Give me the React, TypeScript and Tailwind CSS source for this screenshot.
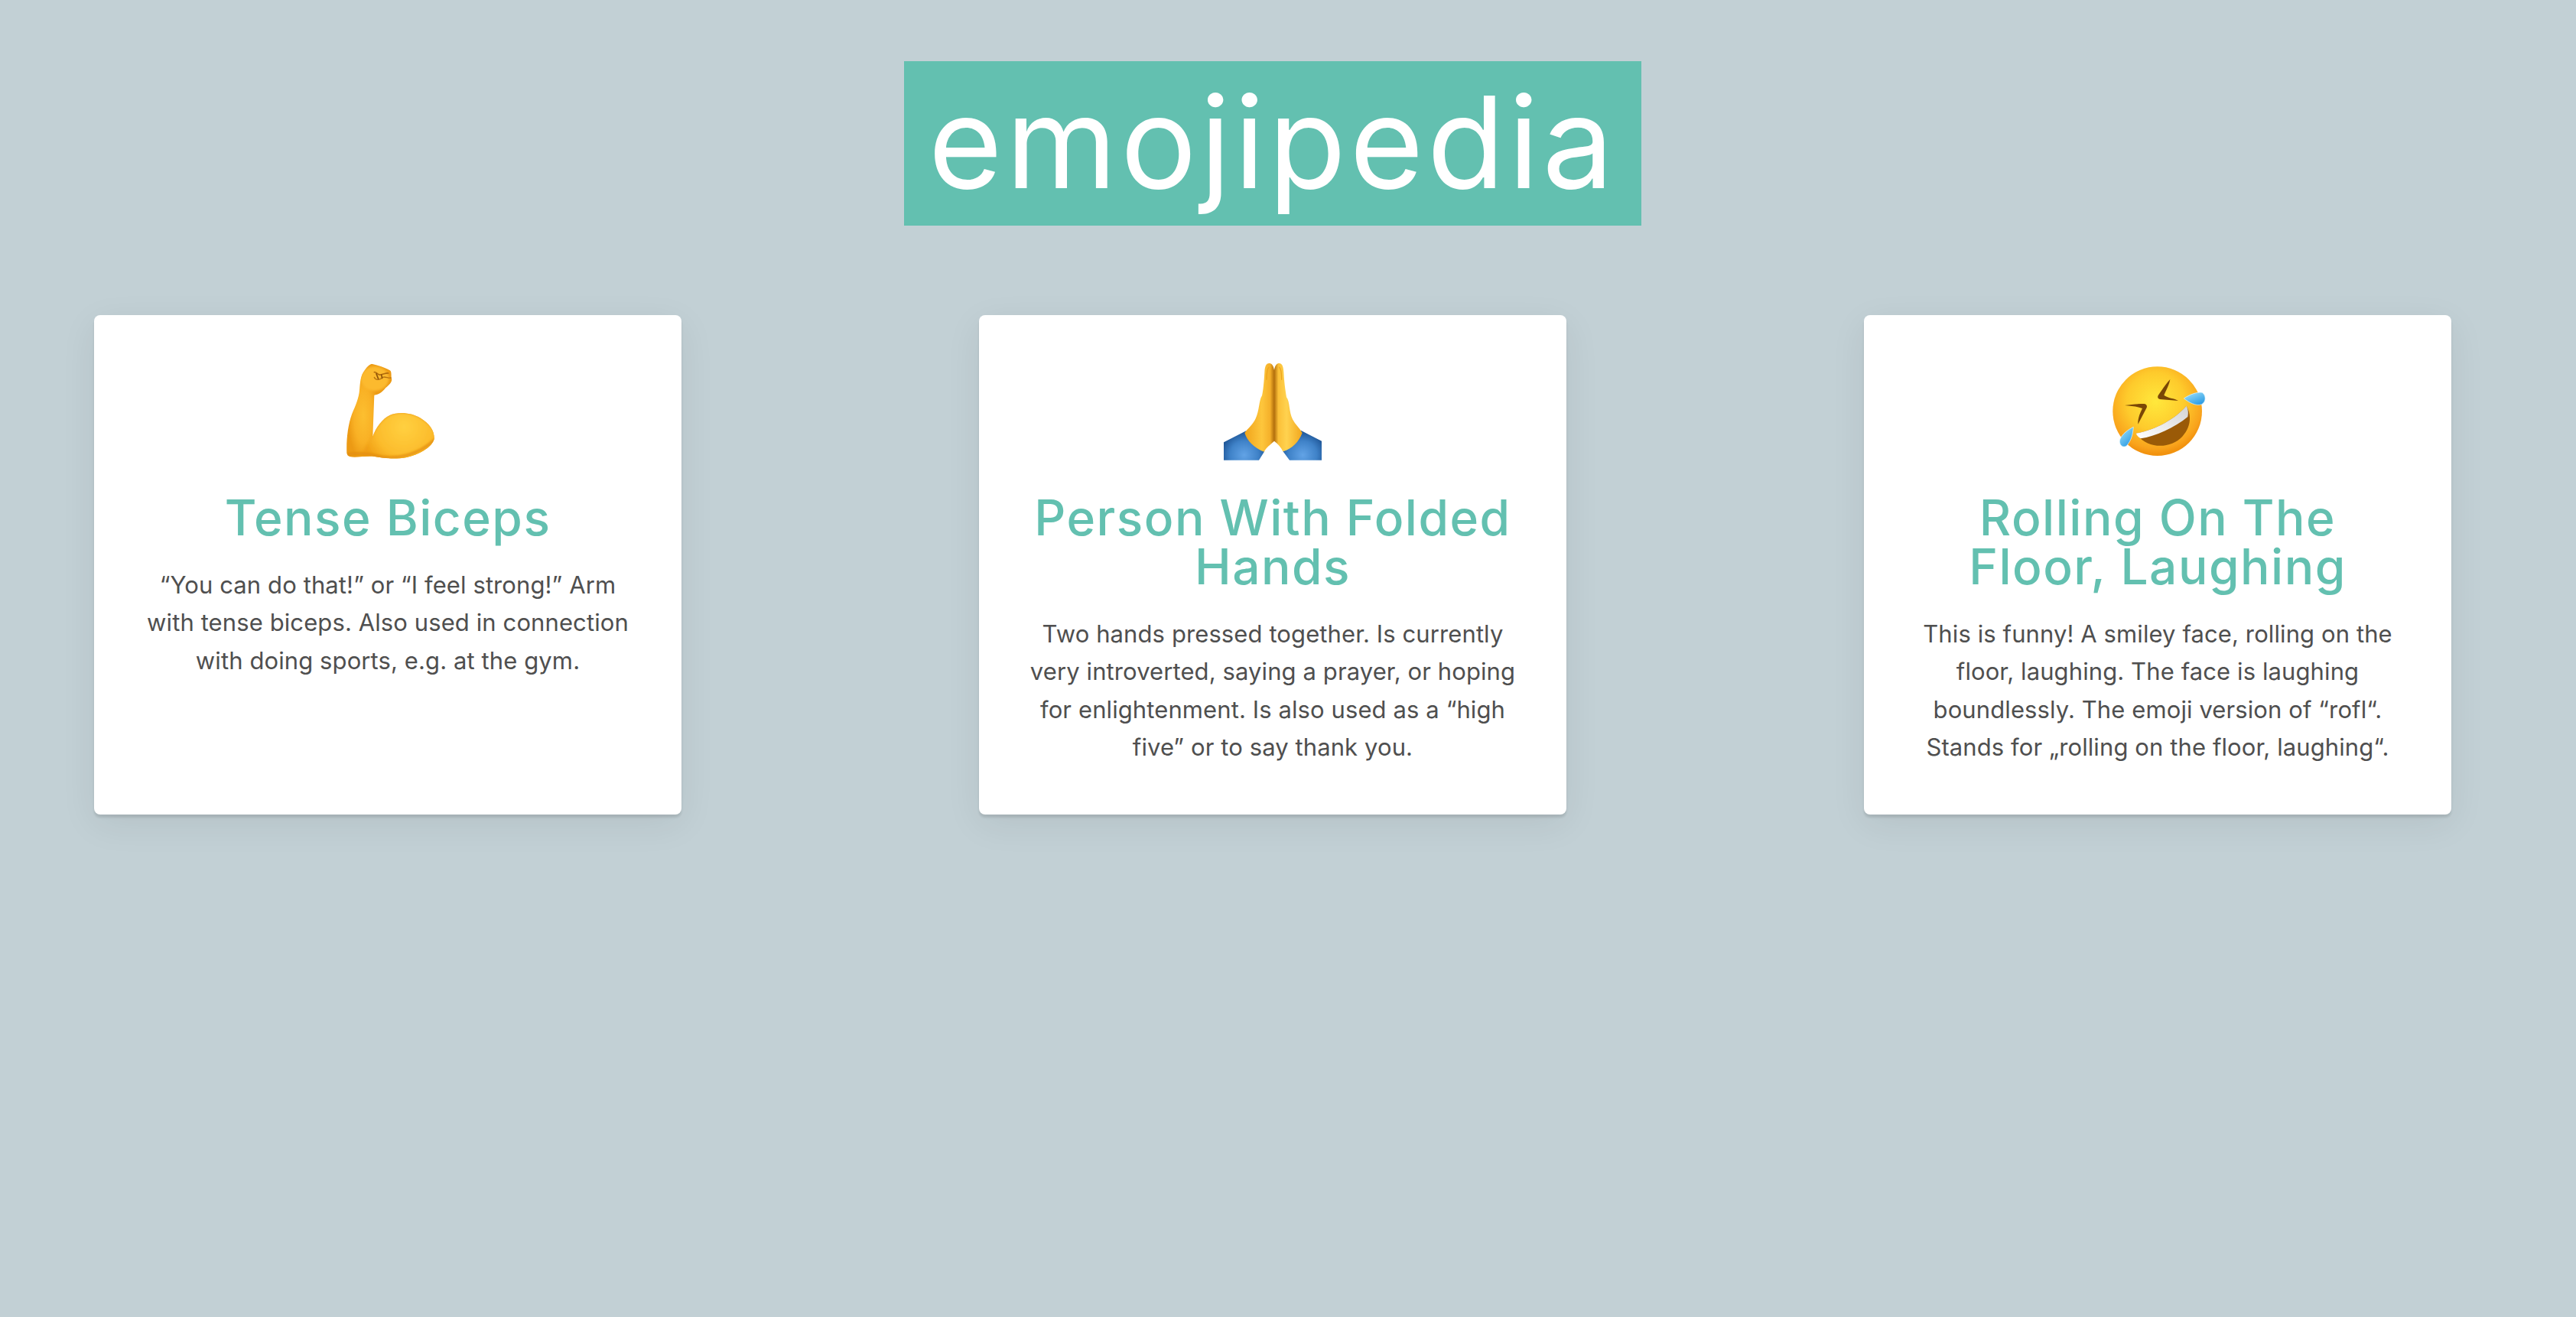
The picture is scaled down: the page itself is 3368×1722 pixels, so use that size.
const Muscle = () => (
  <svg className="w-[128px] h-[128px]" viewBox="129 42 384 384">
    <defs>
      <radialGradient id="m1" gradientUnits="userSpaceOnUse" cx="385" cy="295" r="170">
        <stop offset="0" stopColor="#ffd040" />
        <stop offset="0.65" stopColor="#fcbc2c" />
        <stop offset="1" stopColor="#f09e14" />
      </radialGradient>
      <radialGradient id="m2" gradientUnits="userSpaceOnUse" cx="225" cy="250" r="110" gradientTransform="translate(225 250) scale(0.55 1.6) translate(-225 -250)">
        <stop offset="0" stopColor="#fcbf30" />
        <stop offset="0.6" stopColor="#f9b125" />
        <stop offset="1" stopColor="#ec9a14" />
      </radialGradient>
      <filter id="mb" x="-20%" y="-20%" width="140%" height="140%">
        <feGaussianBlur stdDeviation="4" />
      </filter>
      <clipPath id="mc">
        <path d="M160 395C158 345 165 285 180 245C195 210 208 180 210 150C212 125 214 105 220 90C230 70 245 50 258 47C280 52 315 62 332 75C337 85 333 95 336 105C340 118 325 130 312 142C300 158 285 168 268 170L262 332C275 295 300 262 330 248C360 235 410 236 450 260C485 282 505 310 503 342C495 375 440 405 395 414C350 422 310 418 270 411C235 406 195 418 172 411C165 409 161 403 160 395Z" />
      </clipPath>
    </defs>
    <g clipPath="url(#mc)">
      <rect x="129" y="42" width="384" height="384" fill="url(#m2)" />
      <path d="M262 332C275 295 300 262 330 248C360 235 410 236 450 260C485 282 510 310 510 342C500 385 440 425 395 425C350 430 260 425 215 420C215 390 245 360 262 332Z" fill="url(#m1)" filter="url(#mb)" />
      <path d="M150 405C190 395 250 400 300 412C360 420 440 405 505 345" stroke="#e08a0c" strokeWidth="8" fill="none" filter="url(#mb)" />
      <ellipse cx="270" cy="105" rx="55" ry="48" fill="#fcba2e" filter="url(#mb)" />
    </g>
    <path d="M268 80C275 76 280 92 292 90C305 88 315 82 323 84" stroke="#b06a0c" strokeWidth="5" fill="none" strokeLinecap="round" />
    <path d="M268 100C272 112 290 112 300 100C312 96 322 104 333 102" stroke="#b8720f" strokeWidth="4" fill="none" strokeLinecap="round" />
    <path d="M276 86L284 106M296 90L299 103" stroke="#8f540a" strokeWidth="5" fill="none" strokeLinecap="round" />
  </svg>
);

const Pray = () => (
  <svg className="w-[128px] h-[128px]" viewBox="90 42 384 384">
    <defs>
      <radialGradient id="p1" gradientUnits="userSpaceOnUse" cx="170" cy="405" r="100">
        <stop offset="0" stopColor="#62a3e6" />
        <stop offset="0.55" stopColor="#3f82c8" />
        <stop offset="1" stopColor="#174c8c" />
      </radialGradient>
      <radialGradient id="p2" gradientUnits="userSpaceOnUse" cx="400" cy="405" r="100">
        <stop offset="0" stopColor="#62a3e6" />
        <stop offset="0.55" stopColor="#3f82c8" />
        <stop offset="1" stopColor="#174c8c" />
      </radialGradient>
      <linearGradient id="p3" gradientUnits="userSpaceOnUse" x1="180" y1="0" x2="288" y2="0">
        <stop offset="0" stopColor="#f2a81f" />
        <stop offset="0.55" stopColor="#fdc63c" />
        <stop offset="0.85" stopColor="#f5b02a" />
        <stop offset="1" stopColor="#b36f0c" />
      </linearGradient>
      <linearGradient id="p4" gradientUnits="userSpaceOnUse" x1="396" y1="0" x2="288" y2="0">
        <stop offset="0" stopColor="#f2a81f" />
        <stop offset="0.55" stopColor="#ffd24f" />
        <stop offset="0.85" stopColor="#fbc038" />
        <stop offset="1" stopColor="#b36f0c" />
      </linearGradient>
    </defs>
    <path d="M90 355L178 310C185 345 210 375 250 390L228 425H90Z" fill="url(#p1)" />
    <path d="M474 350L392 308C388 345 360 378 322 390L348 425H474Z" fill="url(#p2)" />
    <path d="M288 350V72C285 52 277 45 268 45C256 45 251 58 250 80C248 115 245 150 240 172C228 190 230 230 215 262C205 285 185 300 172 318C182 350 210 378 248 392C256 375 272 365 288 350Z" fill="url(#p3)" />
    <path d="M288 350V72C291 52 299 45 307 45C319 45 324 58 325 80C327 115 331 150 336 178C350 195 345 235 360 265C370 285 388 300 398 318C385 352 360 380 322 391C315 375 303 362 288 350Z" fill="url(#p4)" />
    <path d="M268 60C258 65 258 90 258 110M307 60C317 65 317 90 317 110" stroke="#eda41d" strokeWidth="4" fill="none" />
  </svg>
);

const Rofl = () => (
  <svg className="w-[128px] h-[128px]" viewBox="81 42 384 384">
    <defs>
      <radialGradient id="r1" gradientUnits="userSpaceOnUse" cx="265" cy="195" r="205">
        <stop offset="0" stopColor="#ffe83c" />
        <stop offset="0.55" stopColor="#fecb2c" />
        <stop offset="0.9" stopColor="#f9a31c" />
        <stop offset="1" stopColor="#f2930f" />
      </radialGradient>
      <linearGradient id="r2" x1="0" y1="0" x2="0.7" y2="1">
        <stop offset="0" stopColor="#a7e6fb" />
        <stop offset="1" stopColor="#2b9be4" />
      </linearGradient>
      <linearGradient id="r3" x1="0" y1="1" x2="1" y2="0">
        <stop offset="0" stopColor="#ffffff" />
        <stop offset="1" stopColor="#d4d4d4" />
      </linearGradient>
    </defs>
    <circle cx="272" cy="233" r="175" fill="url(#r1)" />
    <path d="M322 108C318 132 305 152 298 170C312 182 340 182 354 192L282 186C273 184 271 176 277 168C292 148 305 125 322 108Z" fill="#7a4706" />
    <path d="M144 210C168 212 196 215 213 222C205 238 195 260 196 284L230 219C233 210 228 204 219 204C195 204 168 206 144 210Z" fill="#7a4706" />
    <path d="M188 320C265 305 340 265 386 212C406 245 405 295 370 332C325 380 235 385 188 320Z" fill="#9a5a07" />
    <path d="M188 320C265 305 340 265 386 212C393 225 394 240 391 255C340 298 262 332 207 340C198 335 192 328 188 320Z" fill="url(#r3)" />
    <path d="M376 183C398 168 428 156 448 160C463 170 464 196 446 206C422 214 395 198 376 183Z" fill="url(#r2)" stroke="#e6f7fd" strokeWidth="2" />
    <path d="M178 295C176 322 170 348 152 368C138 380 120 365 125 345C133 322 158 305 178 295Z" fill="url(#r2)" stroke="#e6f7fd" strokeWidth="2" />
  </svg>
);

const cards = [
  {
    icon: <Muscle />,
    title: "Tense Biceps",
    text: "“You can do that!” or “I feel strong!” Arm with tense biceps. Also used in connection with doing sports, e.g. at the gym.",
  },
  {
    icon: <Pray />,
    title: "Person With Folded Hands",
    text: "Two hands pressed together. Is currently very introverted, saying a prayer, or hoping for enlightenment. Is also used as a “high five” or to say thank you.",
  },
  {
    icon: <Rofl />,
    title: "Rolling On The Floor, Laughing",
    text: "This is funny! A smiley face, rolling on the floor, laughing. The face is laughing boundlessly. The emoji version of “rofl“. Stands for „rolling on the floor, laughing“.",
  },
];

export default function App() {
  return (
    <div className="min-h-[1722px] bg-[#c2d0d5] font-['Inter',sans-serif]">
      <div className="w-[3328px] pt-[80px]">
        <h1 className="mx-auto w-[964px] h-[215px] bg-[#63c0b0] text-center text-white text-[166px] leading-[212px] tracking-[4.5px] font-normal">
          emojipedia
        </h1>
        <div className="mt-[117px] flex justify-between px-[123px]">
          {cards.map((c) => (
            <div
              key={c.title}
              className="w-[768px] h-[653px] bg-white rounded-[8px] shadow-[0_4px_3px_rgba(0,0,0,0.10),0_12px_48px_rgba(0,0,0,0.07)] pt-[62px] px-[60px] flex flex-col items-center text-center"
            >
              {c.icon}
              <h2 className="mt-[43px] text-[64px] leading-[64px] tracking-[1.5px] text-[#63c0b0] font-medium">{c.title}</h2>
              <p className="mt-[31px] text-[31px] leading-[49.4px] tracking-[0.1px] text-[#4f4f4f]">{c.text}</p>
            </div>
          ))}
        </div>
      </div>
    </div>
  );
}
